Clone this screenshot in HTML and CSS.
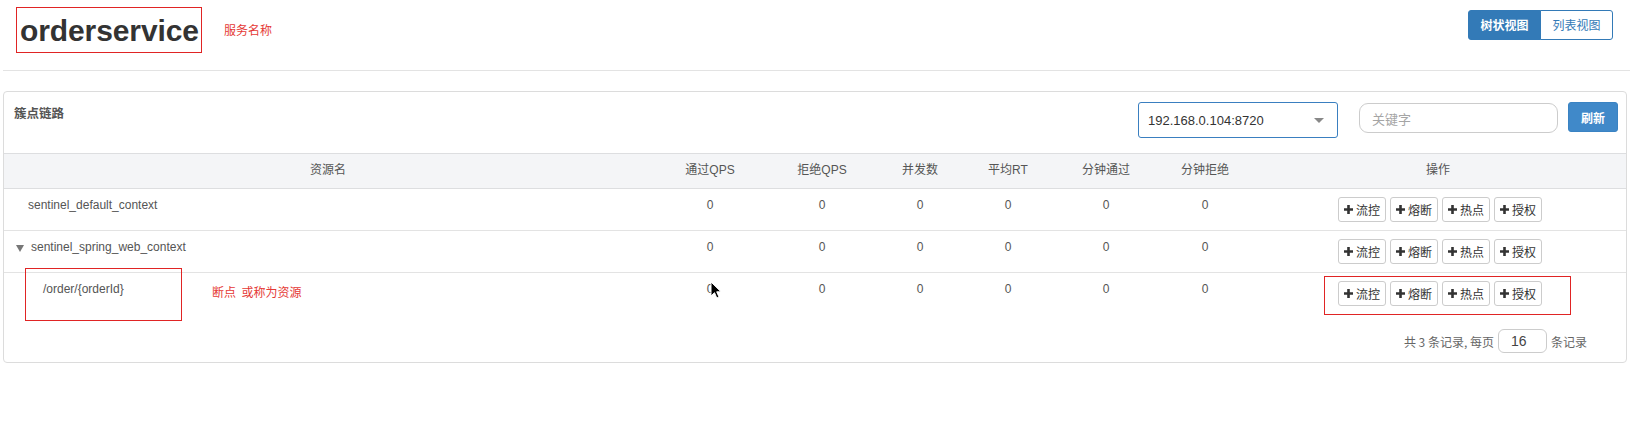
FILE: index.html
```html
<!DOCTYPE html>
<html lang="zh-CN">
<head>
<meta charset="utf-8">
<title>orderservice - 簇点链路</title>
<link rel="stylesheet" href="styles.css">
</head>
<body>
<div class="page">
  <header class="top">
    <div class="title-wrap">
      <h1 class="app-title">orderservice</h1>
      <span class="note note-title">服务名称</span>
    </div>
    <div class="view-toggle">
      <button class="vbtn active">树状视图</button>
      <button class="vbtn">列表视图</button>
    </div>
  </header>
  <hr class="divider">

  <section class="panel">
    <div class="panel-heading">
      <div class="panel-title">簇点链路</div>
      <div class="tools">
        <div class="select">
          <span>192.168.0.104:8720</span>
          <i class="caret"></i>
        </div>
        <input class="search" type="text" placeholder="关键字">
        <button class="refresh">刷新</button>
      </div>
    </div>

    <table class="grid">
      <colgroup>
        <col style="width:648px">
        <col style="width:116px">
        <col style="width:108px">
        <col style="width:88px">
        <col style="width:88px">
        <col style="width:108px">
        <col style="width:90px">
        <col>
      </colgroup>
      <thead>
        <tr>
          <th>资源名</th>
          <th>通过QPS</th>
          <th>拒绝QPS</th>
          <th>并发数</th>
          <th>平均RT</th>
          <th>分钟通过</th>
          <th>分钟拒绝</th>
          <th>操作</th>
        </tr>
      </thead>
      <tbody>
        <tr>
          <td class="name lvl0">sentinel_default_context</td>
          <td>0</td><td>0</td><td>0</td><td>0</td><td>0</td><td>0</td>
          <td class="ops">
            <div class="actions">
              <button class="abtn"><svg class="plus" viewBox="0 0 9 9"><path d="M3.2 0h2.6v3.2H9v2.6H5.8V9H3.2V5.8H0V3.2h3.2z"/></svg>流控</button>
              <button class="abtn"><svg class="plus" viewBox="0 0 9 9"><path d="M3.2 0h2.6v3.2H9v2.6H5.8V9H3.2V5.8H0V3.2h3.2z"/></svg>熔断</button>
              <button class="abtn"><svg class="plus" viewBox="0 0 9 9"><path d="M3.2 0h2.6v3.2H9v2.6H5.8V9H3.2V5.8H0V3.2h3.2z"/></svg>热点</button>
              <button class="abtn"><svg class="plus" viewBox="0 0 9 9"><path d="M3.2 0h2.6v3.2H9v2.6H5.8V9H3.2V5.8H0V3.2h3.2z"/></svg>授权</button>
            </div>
          </td>
        </tr>
        <tr>
          <td class="name lvl1"><i class="tri"></i>sentinel_spring_web_context</td>
          <td>0</td><td>0</td><td>0</td><td>0</td><td>0</td><td>0</td>
          <td class="ops">
            <div class="actions">
              <button class="abtn"><svg class="plus" viewBox="0 0 9 9"><path d="M3.2 0h2.6v3.2H9v2.6H5.8V9H3.2V5.8H0V3.2h3.2z"/></svg>流控</button>
              <button class="abtn"><svg class="plus" viewBox="0 0 9 9"><path d="M3.2 0h2.6v3.2H9v2.6H5.8V9H3.2V5.8H0V3.2h3.2z"/></svg>熔断</button>
              <button class="abtn"><svg class="plus" viewBox="0 0 9 9"><path d="M3.2 0h2.6v3.2H9v2.6H5.8V9H3.2V5.8H0V3.2h3.2z"/></svg>热点</button>
              <button class="abtn"><svg class="plus" viewBox="0 0 9 9"><path d="M3.2 0h2.6v3.2H9v2.6H5.8V9H3.2V5.8H0V3.2h3.2z"/></svg>授权</button>
            </div>
          </td>
        </tr>
        <tr class="last">
          <td class="name lvl2">
            <span class="mark-box"></span>
            /order/{orderId}
            <span class="note note-res">断点 &nbsp;或称为资源</span>
          </td>
          <td class="cursor-cell">0
            <svg class="cursor" viewBox="0 0 12 19" width="12" height="19"><path d="M1 1v14l3.5-3.3 2.3 5.3 2.2-1-2.3-5.2H11z" fill="#000" stroke="#fff" stroke-width="1"/></svg>
          </td>
          <td>0</td><td>0</td><td>0</td><td>0</td><td>0</td>
          <td class="ops">
            <div class="actions marked">
              <button class="abtn"><svg class="plus" viewBox="0 0 9 9"><path d="M3.2 0h2.6v3.2H9v2.6H5.8V9H3.2V5.8H0V3.2h3.2z"/></svg>流控</button>
              <button class="abtn"><svg class="plus" viewBox="0 0 9 9"><path d="M3.2 0h2.6v3.2H9v2.6H5.8V9H3.2V5.8H0V3.2h3.2z"/></svg>熔断</button>
              <button class="abtn"><svg class="plus" viewBox="0 0 9 9"><path d="M3.2 0h2.6v3.2H9v2.6H5.8V9H3.2V5.8H0V3.2h3.2z"/></svg>热点</button>
              <button class="abtn"><svg class="plus" viewBox="0 0 9 9"><path d="M3.2 0h2.6v3.2H9v2.6H5.8V9H3.2V5.8H0V3.2h3.2z"/></svg>授权</button>
            </div>
          </td>
        </tr>
      </tbody>
    </table>

    <div class="pager">
      <span>共 3 条记录, 每页</span>
      <input class="per-page" type="text" value="16">
      <span>条记录</span>
    </div>
  </section>
</div>
</body>
</html>
```

FILE: styles.css
```css
* { box-sizing: border-box; }

body {
  margin: 0;
  background: #fff;
  font-family: "Liberation Sans", Arial, "Noto Sans CJK SC", sans-serif;
  font-size: 12px;
  color: #555;
}

.page {
  padding: 0 3px;
}

.top {
  display: flex;
  justify-content: space-between;
  align-items: flex-start;
  height: 70px;
  padding: 7px 14px 0 13px;
}

.title-wrap {
  display: flex;
  align-items: flex-start;
}

.app-title {
  margin: 0;
  font-size: 30px;
  font-weight: bold;
  line-height: 40px;
  height: 46px;
  padding: 3px 2px 0 3px;
  color: #333;
  border: 1px solid #e02424;
  letter-spacing: -0.1px;
}

.note {
  color: #e53935;
  font-size: 12px;
  font-family: "Noto Sans CJK SC", sans-serif;
}

.note-title {
  margin: 15px 0 0 22px;
  line-height: 16px;
}

.view-toggle {
  display: flex;
  margin-top: 3px;
}

.vbtn {
  font-family: "Noto Sans CJK SC", sans-serif;
  font-size: 12px;
  line-height: 16px;
  height: 30px;
  width: 73px;
  padding: 6px 0;
  border: 1px solid #337ab7;
  background: #fff;
  color: #337ab7;
  margin: 0;
}

.vbtn:first-child {
  border-radius: 3px 0 0 3px;
}

.vbtn:last-child {
  border-radius: 0 3px 3px 0;
  margin-left: -1px;
}

.vbtn.active {
  background: #337ab7;
  color: #fff;
  font-weight: bold;
}

.divider {
  border: 0;
  border-top: 1px solid #e3e3e3;
  margin: 0 -3px 20px 0;
}

.panel {
  border: 1px solid #dcdcdc;
  border-radius: 4px;
  background: #fff;
  padding-bottom: 9px;
}

.panel-heading {
  display: flex;
  justify-content: space-between;
  align-items: flex-start;
  padding: 9px 8px 15px 10px;
}

.panel-title {
  font-family: "Noto Sans CJK SC", sans-serif;
  font-weight: bold;
  font-size: 12.5px;
  color: #555;
  margin-top: 2px;
  line-height: 20px;
}

.tools {
  display: flex;
  align-items: flex-start;
}

.select {
  width: 200px;
  height: 36px;
  border: 1px solid #3a7fc0;
  border-radius: 3px;
  display: flex;
  align-items: center;
  justify-content: space-between;
  padding: 0 13px 0 9px;
  margin-top: 1px;
  font-size: 13px;
  color: #333;
}

.caret {
  width: 0;
  height: 0;
  border-left: 5px solid transparent;
  border-right: 5px solid transparent;
  border-top: 5px solid #888;
}

.search {
  width: 199px;
  height: 30px;
  margin: 2px 0 0 21px;
  border: 1px solid #ccc;
  border-radius: 9px;
  padding: 0 12px;
  font-family: "Noto Sans CJK SC", sans-serif;
  font-size: 13px;
  color: #555;
  outline: none;
}

.search::placeholder {
  color: #a5a5a5;
}

.refresh {
  margin: 1px 0 0 10px;
  width: 50px;
  height: 30px;
  border: 1px solid #3a83c3;
  border-radius: 3px;
  background: #4089c9;
  color: #fff;
  font-family: "Noto Sans CJK SC", sans-serif;
  font-size: 12px;
  font-weight: bold;
  padding: 0;
}

.grid {
  width: 100%;
  table-layout: fixed;
  border-collapse: collapse;
}

.grid th {
  background: #f4f5f7;
  border-top: 1px solid #dddee0;
  border-bottom: 1px solid #dddee0;
  font-family: "Liberation Sans", Arial, "Noto Sans CJK SC", sans-serif;
  font-weight: normal;
  font-size: 12px;
  color: #555;
  line-height: 17px;
  padding: 8px 0 9px;
  text-align: center;
}

.grid td {
  padding: 8px 0;
  line-height: 17px;
  vertical-align: top;
  text-align: center;
  color: #555;
  font-size: 12px;
  border-bottom: 1px solid #e3e3e3;
}

.grid tr.last td {
  border-bottom: 0;
}

.grid td.name {
  text-align: left;
  position: relative;
}

.grid td.ops {
  padding-left: 4px;
}

.lvl0 { padding-left: 24px !important; }
.lvl1 { padding-left: 12px !important; }
.lvl2 { padding-left: 39px !important; }

.tri {
  display: inline-block;
  width: 0;
  height: 0;
  border-left: 4px solid transparent;
  border-right: 4px solid transparent;
  border-top: 7px solid #777;
  margin-right: 7px;
  vertical-align: -1px;
}

.mark-box {
  position: absolute;
  left: 21px;
  top: -5px;
  width: 157px;
  height: 53px;
  border: 1px solid #e02424;
}

.note-res {
  position: absolute;
  left: 208px;
  top: 10px;
  white-space: nowrap;
}

.cursor-cell {
  position: relative;
}

.cursor {
  position: absolute;
  left: 58px;
  top: 8px;
}

.actions {
  display: flex;
  justify-content: center;
  gap: 4px;
  position: relative;
}

.actions.marked::after {
  content: "";
  position: absolute;
  left: 70px;
  top: -5px;
  width: 245px;
  height: 37px;
  border: 1px solid #e02424;
  pointer-events: none;
}

.abtn {
  display: flex;
  align-items: center;
  height: 25px;
  width: 48px;
  padding: 0 0 0 5px;
  margin: 0;
  border: 1px solid #ccc;
  border-radius: 3px;
  background: #fff;
  font-family: "Noto Sans CJK SC", sans-serif;
  font-size: 12px;
  color: #333;
}

.plus {
  width: 9px;
  height: 9px;
  fill: #333;
  margin-right: 3px;
  flex: none;
}

.pager {
  display: flex;
  justify-content: flex-end;
  align-items: center;
  gap: 4px;
  padding: 15px 39px 0 0;
  font-family: "Noto Sans CJK SC", sans-serif;
  font-size: 12px;
  color: #666;
}

.per-page {
  width: 49px;
  height: 24px;
  border: 1px solid #ccc;
  border-radius: 6px;
  padding: 0 0 0 12px;
  font-family: "Liberation Sans", Arial, sans-serif;
  font-size: 14px;
  color: #444;
  outline: none;
}
```
